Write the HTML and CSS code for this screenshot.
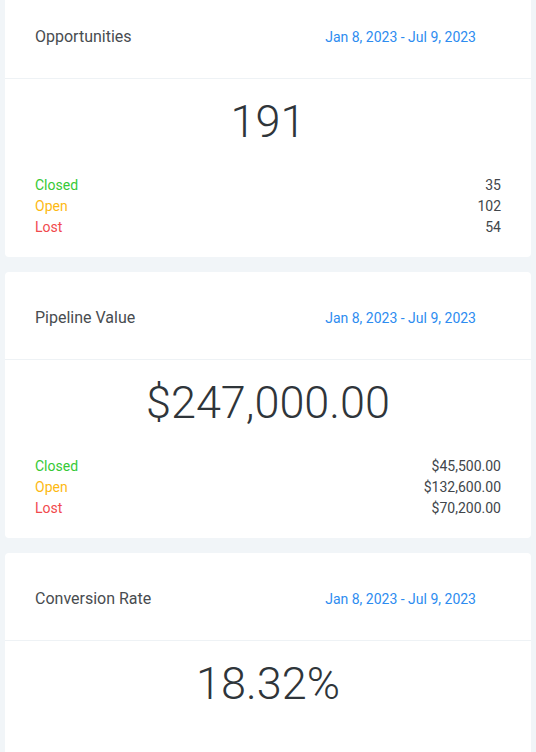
FILE: index.html
```html
<!DOCTYPE html>
<html>
<head>
<meta charset="utf-8" />
<title>Dashboard</title>
<link rel="stylesheet" href="styles.css">
</head>
<body>
<div class="cards">
  <div class="card">
    <div class="cardHead">
      <span class="cardTitle">Opportunities</span>
      <span class="cardDate">Jan 8, 2023 - Jul 9, 2023</span>
    </div>
    <div class="cardBody">
      <div class="bigNum">191</div>
      <ul class="rows">
        <li><span class="closed">Closed</span><span>35</span></li>
        <li><span class="open">Open</span><span>102</span></li>
        <li><span class="lost">Lost</span><span>54</span></li>
      </ul>
    </div>
  </div>
  <div class="card">
    <div class="cardHead">
      <span class="cardTitle">Pipeline Value</span>
      <span class="cardDate">Jan 8, 2023 - Jul 9, 2023</span>
    </div>
    <div class="cardBody">
      <div class="bigNum">$247,000.00</div>
      <ul class="rows">
        <li><span class="closed">Closed</span><span>$45,500.00</span></li>
        <li><span class="open">Open</span><span>$132,600.00</span></li>
        <li><span class="lost">Lost</span><span>$70,200.00</span></li>
      </ul>
    </div>
  </div>
  <div class="card">
    <div class="cardHead">
      <span class="cardTitle">Conversion Rate</span>
      <span class="cardDate">Jan 8, 2023 - Jul 9, 2023</span>
    </div>
    <div class="cardBody tall">
      <div class="bigNum">18.32%</div>
    </div>
  </div>
</div>
</body>
</html>
```

FILE: styles.css
```css
* {
  padding: 0px;
  margin: 0px;
  box-sizing: border-box;
}
body {
  background-color: #f1f5f8;
  font-family: Roboto, "Liberation Sans", sans-serif;
  color: #343a40;
  padding: 0px 5px;
}
.cards {
  display: flex;
  flex-direction: column;
  gap: 15px;
  margin-top: -9px;
}
.card {
  background-color: #fff;
  border-radius: 4px;
}
.cardHead {
  display: flex;
  justify-content: space-between;
  align-items: center;
  padding: 34px 55px 29px 30px;
  border-bottom: 1px solid #eef2f5;
}
.cardTitle {
  font-size: 16px;
  line-height: 24px;
  color: #484c50;
}
.cardDate {
  font-size: 14px;
  line-height: 24px;
  color: #2d8cf0;
}
.cardBody {
  padding: 20px 30px 19px 30px;
}
.cardBody.tall {
  padding-bottom: 120px;
}
.bigNum {
  font-size: 45px;
  font-weight: 300;
  line-height: 46px;
  text-align: center;
  color: #2f353a;
}
.rows {
  list-style: none;
  margin-top: 30px;
}
.rows li {
  display: flex;
  justify-content: space-between;
  font-size: 14px;
  line-height: 21px;
  color: #41464b;
}
.closed {
  color: #36c936;
}
.open {
  color: #fdb913;
}
.lost {
  color: #f1494d;
}
```
